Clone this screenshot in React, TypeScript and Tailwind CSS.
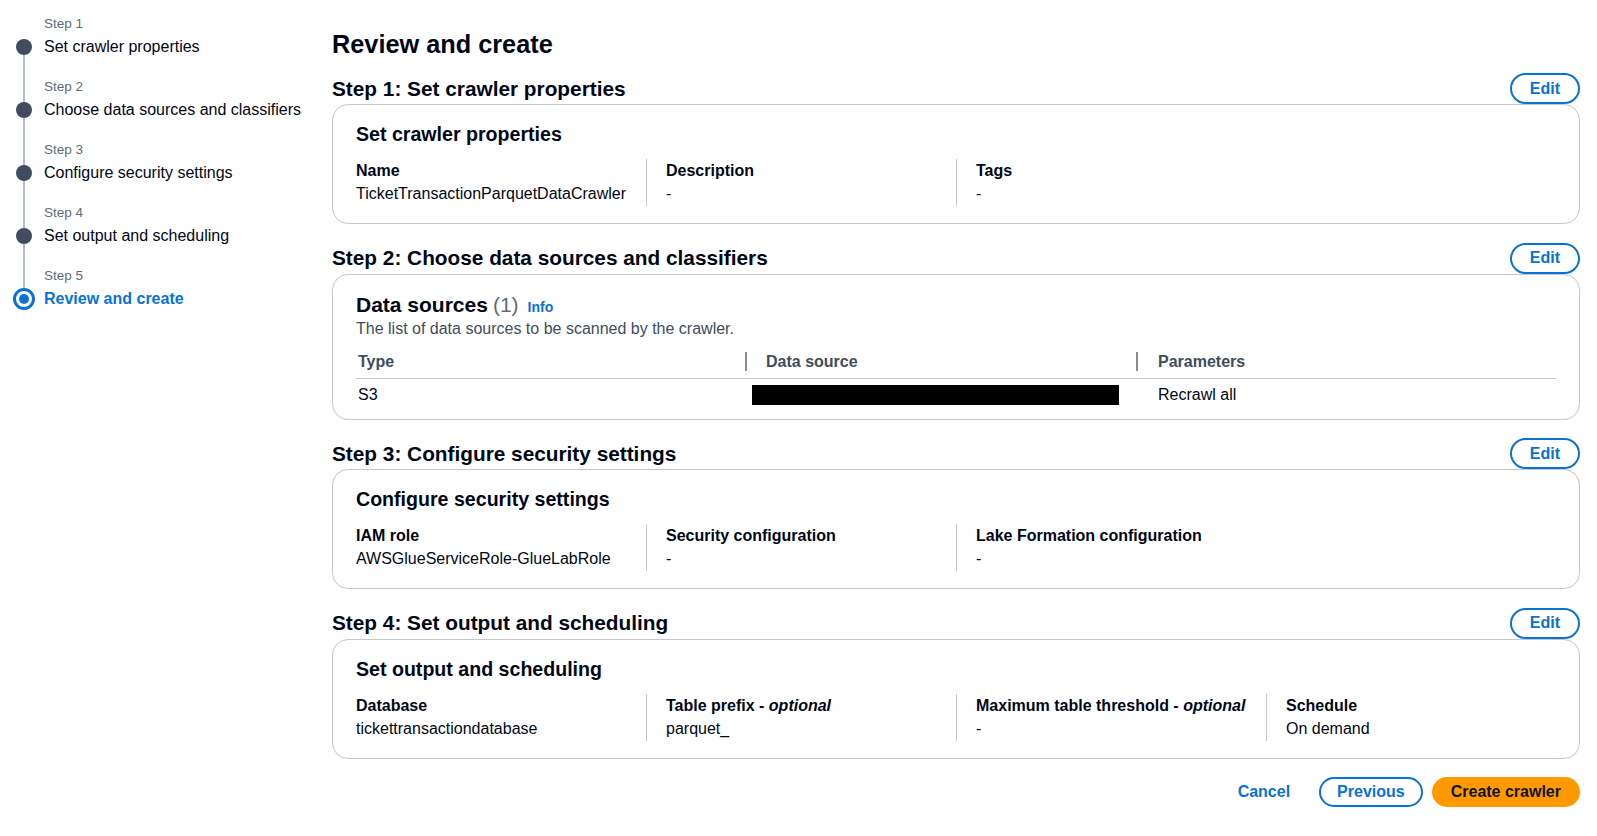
import React from "react";

const steps = [
  "Set crawler properties",
  "Choose data sources and classifiers",
  "Configure security settings",
  "Set output and scheduling",
  "Review and create",
];

function Sidebar() {
  return (
    <div className="w-[332px] shrink-0 pt-[13px] pl-[16px]">
      {steps.map((s, i) => {
        const last = i === steps.length - 1;
        return (
          <div key={s} className="flex">
            <div className="w-[15px] flex flex-col items-center mr-[13px]">
              <div className="h-[22px] flex justify-center">
                {i > 0 && <div className="w-[2px] h-full bg-[#b6bec9]" />}
              </div>
              <div className="h-[23px] flex items-center justify-center relative">
                {i > 0 && <div className="absolute top-0 bottom-0 left-1/2 -ml-[1px] w-[2px] bg-[#b6bec9]" />}
                {!last && <div className="absolute top-1/2 bottom-0 left-1/2 -ml-[1px] w-[2px] bg-[#b6bec9]" />}
                {last ? (
                  <div className="relative w-[22px] h-[22px] shrink-0 rounded-full border-[3px] border-[#0972d3] bg-white flex items-center justify-center">
                    <div className="w-[10px] h-[10px] rounded-full bg-[#0972d3]" />
                  </div>
                ) : (
                  <div className="relative w-[16px] h-[16px] shrink-0 rounded-full bg-[#414d5c]" />
                )}
              </div>
              <div className="h-[18px] flex justify-center">
                {!last && <div className="w-[2px] h-full bg-[#b6bec9]" />}
              </div>
            </div>
            <div className="flex flex-col">
              <div className="h-[22px] leading-[22px] text-[13.5px] text-[#5f6b7a]">Step {i + 1}</div>
              <div
                className={
                  "h-[23px] leading-[23px] text-[16px] whitespace-nowrap " +
                  (last ? "text-[#0972d3] font-bold" : "text-[#000716]")
                }
              >
                {s}
              </div>
            </div>
          </div>
        );
      })}
    </div>
  );
}

function EditButton() {
  return (
    <button className="h-[31px] px-[18px] rounded-full border-2 border-[#0972d3] text-[#0972d3] font-bold text-[16px] leading-[20px] bg-white">
      Edit
    </button>
  );
}

function SectionHeader({ title }: { title: string }) {
  return (
    <div className="h-[31px] flex items-center justify-between">
      <h2 className="text-[20.8px] leading-[28px] font-bold text-[#000716]">{title}</h2>
      <EditButton />
    </div>
  );
}

type KV = { label: React.ReactNode; value: string };

function KVCard({ title, items }: { title: string; items: KV[] }) {
  return (
    <div className="border border-[#c6c6cd] rounded-[16px] px-[23px] pt-[17px] pb-[17px] bg-white">
      <div className="text-[19.6px] leading-[24px] font-bold text-[#000716]">{title}</div>
      <div className="flex mt-[13px]">
        {items.map((it, i) => (
          <div
            key={i}
            className={
              i === 0
                ? "w-[290px] shrink-0"
                : i === items.length - 1
                ? "flex-1 min-w-0 border-l border-[#c6c6cd] pl-[19px]"
                : "w-[310px] shrink-0 border-l border-[#c6c6cd] pl-[19px]"
            }
          >
            <div className="text-[16px] leading-[23px] font-bold text-[#000716] whitespace-nowrap">{it.label}</div>
            <div className="text-[16px] leading-[24px] text-[#000716] whitespace-nowrap">{it.value}</div>
          </div>
        ))}
      </div>
    </div>
  );
}

function Optional({ text }: { text: string }) {
  return (
    <>
      {text} - <i className="font-bold">optional</i>
    </>
  );
}

function DataSourcesCard() {
  return (
    <div className="border border-[#c6c6cd] rounded-[16px] px-[23px] pt-[17px] pb-[13px] bg-white">
      <div className="flex items-baseline h-[26px] leading-[26px]">
        <span className="text-[21px] font-bold text-[#000716]">Data sources</span>
        <span className="text-[21px] text-[#5f6b7a] ml-[5px]">(1)</span>
        <span className="text-[14px] font-bold text-[#0972d3] ml-[9px]">Info</span>
      </div>
      <div className="text-[16px] leading-[22px] text-[#414d5c]">The list of data sources to be scanned by the crawler.</div>
      <div className="mt-[10px] flex items-center pb-[5px] border-b border-[#c6c6cd]">
        <div className="w-[389px] shrink-0 pl-[2px] h-[23px] leading-[23px] text-[16px] font-bold text-[#414d5c]">Type</div>
        <div className="w-[2px] h-[19px] bg-[#8c8c94] shrink-0" />
        <div className="w-[389px] shrink-0 pl-[19px] h-[23px] leading-[23px] text-[16px] font-bold text-[#414d5c]">Data source</div>
        <div className="w-[2px] h-[19px] bg-[#8c8c94] shrink-0" />
        <div className="flex-1 min-w-0 pl-[20px] h-[23px] leading-[23px] text-[16px] font-bold text-[#414d5c]">Parameters</div>
      </div>
      <div className="flex items-center pt-[5px]">
        <div className="w-[391px] shrink-0 pl-[2px] h-[22px] leading-[22px] text-[16px] text-[#000716]">S3</div>
        <div className="w-[391px] shrink-0 pl-[5px] h-[22px] flex items-center">
          <div className="w-[367px] h-[20px] bg-black" />
        </div>
        <div className="flex-1 min-w-0 pl-[20px] h-[22px] leading-[22px] text-[16px] text-[#000716]">Recrawl all</div>
      </div>
    </div>
  );
}

export default function App() {
  return (
    <div
      className="flex w-full min-h-[836px] bg-white text-[#000716]"
      style={{ fontFamily: '"Liberation Sans", Arial, sans-serif' }}
    >
      <Sidebar />
      <div className="flex-1 min-w-0 pr-[17px] pt-[29px] pb-[30px]">
        <h1 className="text-[25.3px] leading-[30px] font-bold text-[#000716]">Review and create</h1>
        <div className="mt-[14px] flex flex-col gap-[18.5px]">
          <div>
            <SectionHeader title="Step 1: Set crawler properties" />
            <KVCard
              title="Set crawler properties"
              items={[
                { label: "Name", value: "TicketTransactionParquetDataCrawler" },
                { label: "Description", value: "-" },
                { label: "Tags", value: "-" },
              ]}
            />
          </div>
          <div>
            <SectionHeader title="Step 2: Choose data sources and classifiers" />
            <DataSourcesCard />
          </div>
          <div>
            <SectionHeader title="Step 3: Configure security settings" />
            <KVCard
              title="Configure security settings"
              items={[
                { label: "IAM role", value: "AWSGlueServiceRole-GlueLabRole" },
                { label: "Security configuration", value: "-" },
                { label: "Lake Formation configuration", value: "-" },
              ]}
            />
          </div>
          <div>
            <SectionHeader title="Step 4: Set output and scheduling" />
            <KVCard
              title="Set output and scheduling"
              items={[
                { label: "Database", value: "tickettransactiondatabase" },
                { label: <Optional text="Table prefix" />, value: "parquet_" },
                { label: <Optional text="Maximum table threshold" />, value: "-" },
                { label: "Schedule", value: "On demand" },
              ]}
            />
          </div>
          <div className="flex justify-end items-center gap-[9px]">
            <button className="h-[30px] px-[20px] text-[16px] font-bold text-[#0972d3]">Cancel</button>
            <button className="h-[30px] px-[16px] rounded-full border-2 border-[#0972d3] text-[16px] font-bold text-[#0972d3] bg-white">
              Previous
            </button>
            <button className="h-[30px] px-[17px] rounded-full border-2 border-[#ff9900] bg-[#ff9900] text-[16px] font-bold text-[#0f141a]">
              Create crawler
            </button>
          </div>
        </div>
      </div>
    </div>
  );
}
